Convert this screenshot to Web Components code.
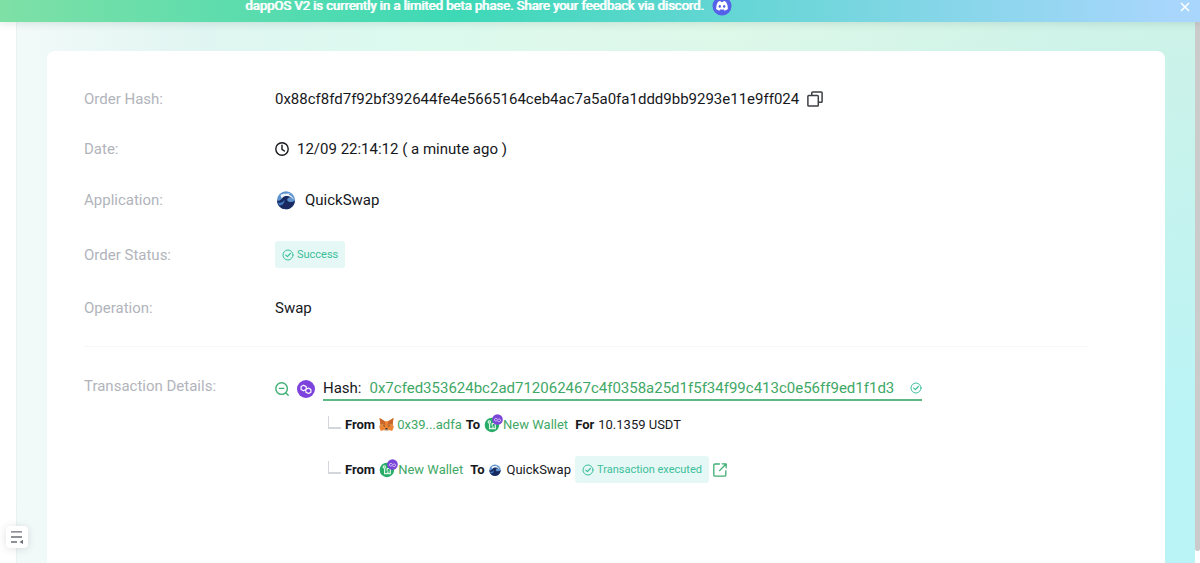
<!DOCTYPE html>
<html lang="en">
<head>
<meta charset="utf-8">
<meta name="viewport" content="width=device-width, initial-scale=1">
<title>dappOS - Order Details</title>
<style>
	body {
		margin: 0;
		color: #16181c;
		font-family: Roboto, "Liberation Sans", sans-serif;
		font-size: 15px;
		line-height: 20px;
		--green: #3fa866;
		--teal: #3cbf9a;
	}
</style>
</head>
<body>

<order-page>
	<beta-banner slot="banner">dappOS V2 is currently in a limited beta phase. Share your feedback via discord.</beta-banner>

	<order-card>
		<order-row label="Order Hash:">
			<span>0x88cf8fd7f92bf392644fe4e5665164ceb4ac7a5a0fa1ddd9bb9293e11e9ff024</span>
			<icon-button label="Copy order hash" icon="copy" size="16"></icon-button>
		</order-row>
		<order-row label="Date:">
			<ui-icon name="clock" size="14"></ui-icon>
			<span>12/09 22:14:12 ( a minute ago )</span>
		</order-row>
		<order-row label="Application:">
			<ui-icon name="quickswap" size="22"></ui-icon>
			<span>QuickSwap</span>
		</order-row>
		<order-row label="Order Status:">
			<status-tag>Success</status-tag>
		</order-row>
		<order-row label="Operation:">
			<span>Swap</span>
		</order-row>

		<order-row slot="details" label="Transaction Details:">
			<tx-details hash="0x7cfed353624bc2ad712062467c4f0358a25d1f5f34f99c413c0e56ff9ed1f1d3">
				<tx-step>
					<b>From</b>
					<wallet-link icon="fox">0x39...adfa</wallet-link>
					<b>To</b>
					<wallet-link icon="wallet" spaced>New Wallet</wallet-link>
					<b>For</b>
					<span>10.1359 USDT</span>
				</tx-step>
				<tx-step>
					<b>From</b>
					<wallet-link icon="wallet" spaced>New Wallet</wallet-link>
					<b>To</b>
					<ui-icon name="quickswap" size="14"></ui-icon>
					<span>QuickSwap</span>
					<status-tag>Transaction executed</status-tag>
					<icon-button label="Open in explorer" icon="external" size="14"></icon-button>
				</tx-step>
			</tx-details>
		</order-row>
	</order-card>
</order-page>

<script>
// Icon set, one entry per name: [viewBox, markup]
const ICONS = {
	copy: ['0 0 16 16', `
		<g fill="none" stroke="#3c3f44" stroke-width="1.5" stroke-linejoin="round">
			<rect x=".9" y="4.6" width="10.4" height="10.4" rx=".8"/>
			<path d="M4.8 4.4V1.7q0-.8.8-.8h8.7q.8 0 .8.8v8.7q0 .8-.8.8h-2.8"/>
		</g>`],
	clock: ['0 0 14 14', `
		<g fill="none" stroke="#16181c" stroke-width="1.4" stroke-linecap="round" stroke-linejoin="round">
			<circle cx="7" cy="7" r="6.2"/>
			<path d="M7 3.2V7.4L9.4 9"/>
		</g>`],
	check: ['0 0 12 12', `
		<g fill="none" stroke="currentColor" stroke-linecap="round" stroke-linejoin="round">
			<circle cx="6" cy="6" r="5"/>
			<path d="M3.7 6.1 5.4 7.6 8.4 4.5" stroke-width="1.2"/>
		</g>`],
	collapse: ['0 0 14 14', `
		<g fill="none" stroke="#3fae72" stroke-width="1.4" stroke-linecap="round">
			<circle cx="6.6" cy="6.6" r="5.8"/>
			<path d="M4.4 6.4h4.4M11 11l2.2 2.2"/>
		</g>`],
	external: ['0 0 14 14', `
		<g fill="none" stroke="#3fae72" stroke-width="1.3" stroke-linecap="round" stroke-linejoin="round">
			<path d="M6.4 1H2Q.8 1 .8 2.2V12q0 1.2 1.2 1.2h9.6q1.2 0 1.2-1.2V7.8"/>
			<path d="M9.2.8h4v4M13 1 6.6 7.6"/>
		</g>`],
	close: ['0 0 10 10', `
		<path d="M1 1l8 8M9 1 1 9" fill="none" stroke="#fff" stroke-width="1.6"/>`],
	menu: ['0 0 14 14', `
		<path d="M1 1.8h11M1 7h11M1 12h6" fill="none" stroke="#6b6e75" stroke-width="1.3"/>
		<path d="M13 9.8v4.2L9.5 11.9z" fill="#6b6e75"/>`],
	discord: ['0 0 20 20', `
		<circle cx="10" cy="10" r="9.5" fill="#5661ea"/>
		<path d="M5.9 5.9Q7.2 5.2 8.5 5l.5.9h2l.5-.9q1.3.2 2.6.9 2.2 3.3 1.8 7.2-1.5 1.1-3.2 1.6l-.8-1.3H8.1l-.8 1.3q-1.7-.5-3.2-1.6-.3-4 1.8-7.2z" fill="#fff"/>
		<ellipse cx="7.8" cy="10.4" rx="1.2" ry="1.4" fill="#5661ea"/>
		<ellipse cx="12.2" cy="10.4" rx="1.2" ry="1.4" fill="#5661ea"/>`],
	polygon: ['0 0 18 18', `
		<circle cx="9" cy="9" r="9" fill="#7c43dd"/>
		<g fill="none" stroke="#fff" stroke-width="1.2" stroke-linejoin="round">
			<path d="M9.2 8.9V6.6L6.6 5.2 4.1 6.6v2.8l2.5 1.4 4.8-2.8 2.5 1.4v2.8l-2.5 1.4-2.5-1.4V10.3"/>
		</g>`],
	quickswap: ['-1 -1 22 22', `
		<circle cx="10" cy="10.3" r="9" fill="#5e93cf"/>
		<path d="M4.5 5.2C6 3.800 8 3.400 10 3.800l4-.6-1.500 1.200c2.500.8 4.300 2.700 5.300 5-2.300-2-5-2.900-7-1.800l-5 1z" fill="#eef5fb"/>
		<path d="M1.100 10.500C3.500 11.500 5.500 9.500 6.500 7.800 8 5.500 12.500 5.200 16 7.800c-3.200-.9-5 .3-4.800 2.300.3 2.300 4.500 2.800 7.700.4C18.700 15.600 14.800 19.300 10 19.300 5 19.300 1.100 15.500 1.100 10.500z" fill="#182a60"/>
		<path d="M2 12.500c2.800.9 5.600-.6 6.600-3 0 4-2.500 6.500-5.600 5.800z" fill="#3f78bd"/>`],
	fox: ['0 0 16 16', `
		<path d="M.6 1 6.2 4.5h3.6L15.4 1l-.8 6.5 1 3.3-1.5 4-3.5-1-1.5 1.2H6.9L5.4 13.8l-3.5 1-1.5-4 1-3.3z" fill="#ee8431"/>
		<path d="M.6 1 6.2 4.500 7 9 1.4 7.5zM15.4 1 9.8 4.5 9 9l5.6-1.5z" fill="#c9672b"/>
		<path d="M1.4 7.5 6 8l-3 3-2.6-.2zM14.6 7.5 10 8l3 3 2.6-.2z" fill="#e28a42"/>
		<path d="M5.4 13.8 6.9 12.5h2.2l1.5 1.3L9.1 15H6.9z" fill="#d9c5b2"/>
		<path d="M4.3 8.6l2 .9-.7.8zM11.7 8.6l-2 .9.7.8z" fill="#273341"/>
		<path d="M7 12h2l.3 1.3H6.7z" fill="#1c1a1a"/>`],
	wallet: ['0 0 20 20', `
		<circle cx="8.3" cy="11.5" r="7.6" fill="#27ac67"/>
		<g fill="none" stroke="#dff6e9" stroke-width="1.3" stroke-linejoin="round">
			<circle cx="5.6" cy="8.3" r="1.2"/>
			<path d="M5.9 9.9v5.6h6V10H8.6v2.4M8.3 13.9h2"/>
		</g>
		<circle cx="14.2" cy="5.8" r="5.6" fill="#7b45d8"/>
		<path d="M14.3 5.7 12.6 4.4 11 5.5v1.2l1.6 1 3.2-2.7 1.6 1v1.3l-1.6 1-1.5-.9" fill="none" stroke="#ddcdf7" stroke-width=".9"/>`]
};

class UiIcon extends HTMLElement {
	constructor() {
		super();
		this.attachShadow({ mode: 'open' });
	}

	connectedCallback() {
		const [viewBox, shapes] = ICONS[this.getAttribute('name')];
		const size = this.getAttribute('size') || 16;
		this.shadowRoot.innerHTML = `
			<style>
				:host {
					display: inline-flex;
					flex: none;
				}

				svg {
					display: block;
				}
			</style>
			<svg width="${size}" height="${size}" viewBox="${viewBox}" aria-hidden="true">${shapes}</svg>
		`;
	}
}

// A bare button that only holds an icon
class IconButton extends HTMLElement {
	constructor() {
		super();
		this.attachShadow({ mode: 'open' });
	}

	connectedCallback() {
		this.shadowRoot.innerHTML = `
			<style>
				:host {
					display: inline-flex;
					flex: none;
				}

				button {
					background: none;
					border: 0;
					cursor: pointer;
					display: flex;
					padding: 0;
				}
			</style>
			<button type="button" aria-label="${this.getAttribute('label')}">
				<ui-icon name="${this.getAttribute('icon')}" size="${this.getAttribute('size')}"></ui-icon>
			</button>
		`;
	}
}

class BetaBanner extends HTMLElement {
	constructor() {
		super();
		this.attachShadow({ mode: 'open' }).innerHTML = `
			<style>
				:host {
					align-items: flex-start;
					background: linear-gradient(90deg, #7ee0a5, #3dd9b6 38%, #5dd6d0 57%, #a9d6fd 98%);
					box-shadow: 0 1px 8px rgba(40, 90, 70, 0.16);
					box-sizing: border-box;
					color: #fff;
					display: flex;
					font-size: 13px;
					height: 22px;
					line-height: 12px;
					padding: 0 10px 0 245px;
					position: relative;
					text-shadow: 1px 0 #fff;
				}

				.message {
					align-items: center;
					display: flex;
					flex: 1;
					gap: 8px;
					height: 12px;
				}

				a {
					display: flex;
				}

				icon-button {
					padding-top: 2px;
				}
			</style>
			<div class="message">
				<slot></slot>
				<a href="#discord" aria-label="Discord"><ui-icon name="discord" size="20"></ui-icon></a>
			</div>
			<icon-button label="Close" icon="close" size="10"></icon-button>
		`;
	}
}

class OrderPage extends HTMLElement {
	constructor() {
		super();
		this.attachShadow({ mode: 'open' }).innerHTML = `
			<style>
				:host {
					display: flex;
					flex-direction: column;
					min-height: 100vh;
					position: relative;
				}

				.body {
					display: flex;
					flex: 1;
				}

				.rail {
					background: #fff;
					border-right: 1px solid #e8f2f0;
					width: 16px;
				}

				main {
					background:
						linear-gradient(to bottom, rgba(184, 244, 248, 0), rgba(184, 244, 248, 0.9) 75%) right / 50% 100% no-repeat,
						linear-gradient(90deg, #f2faf9, #e0f5f1 16%, #dcfaef 32%, #dff8e8 60%, #cff3e8 90%, #cdf2e8);
					display: flex;
					flex: 1;
					padding: 29px 30px 0;
				}

				.scroll {
					background: #fff;
					padding-bottom: 12px;
					display: flex;
				}

				.thumb {
					background: #cbcbcb;
					border-radius: 0 0 2px 2px;
					width: 5px;
				}

				.toggle {
					align-items: center;
					background: #fff;
					border-radius: 4px;
					bottom: 15px;
					box-shadow: 0 1px 8px rgba(0, 0, 0, 0.12);
					display: flex;
					height: 22px;
					justify-content: center;
					left: 6px;
					position: absolute;
					width: 22px;
				}
			</style>
			<slot name="banner"></slot>
			<div class="body">
				<div class="rail"></div>
				<main><slot></slot></main>
				<div class="scroll"><div class="thumb"></div></div>
			</div>
			<icon-button class="toggle" label="Toggle menu" icon="menu" size="14"></icon-button>
		`;
	}
}

class OrderCard extends HTMLElement {
	constructor() {
		super();
		this.attachShadow({ mode: 'open' }).innerHTML = `
			<style>
				:host {
					background: #fff;
					border-radius: 8px 8px 0 0;
					box-sizing: border-box;
					display: block;
					flex: 1;
					padding: 38px 76px 38px 37px;
				}

				.rows {
					display: grid;
					row-gap: 30px;
				}

				hr {
					border: 0;
					border-top: 1px solid #f7f7f8;
					margin: 28px 0 29px;
				}
			</style>
			<div class="rows"><slot></slot></div>
			<hr>
			<slot name="details"></slot>
		`;
	}
}

class OrderRow extends HTMLElement {
	constructor() {
		super();
		this.attachShadow({ mode: 'open' });
	}

	connectedCallback() {
		this.shadowRoot.innerHTML = `
			<style>
				:host {
					align-items: center;
					display: grid;
					grid-template-columns: 191px 1fr;
				}

				:host([slot="details"]) {
					align-items: start;
				}

				.label {
					color: #b1b4bb;
				}

				.value {
					align-items: center;
					display: flex;
					gap: 8px;
					min-width: 0;
				}
			</style>
			<div class="label">${this.getAttribute('label')}</div>
			<div class="value"><slot></slot></div>
		`;
	}
}

class StatusTag extends HTMLElement {
	constructor() {
		super();
		this.attachShadow({ mode: 'open' }).innerHTML = `
			<style>
				:host {
					align-items: center;
					background: #e5f8f5;
					border-radius: 3px;
					color: var(--teal);
					display: inline-flex;
					font-size: 11px;
					gap: 3px;
					height: 27px;
					padding: 0 7px;
				}
			</style>
			<ui-icon name="check" size="12"></ui-icon>
			<slot></slot>
		`;
	}
}

class WalletLink extends HTMLElement {
	constructor() {
		super();
		this.attachShadow({ mode: 'open' });
	}

	connectedCallback() {
		const icon = this.getAttribute('icon');
		this.shadowRoot.innerHTML = `
			<style>
				:host {
					display: inline-flex;
				}

				:host([spaced]) {
					margin-right: 3px;
				}

				a {
					align-items: center;
					color: var(--green);
					display: flex;
					gap: 3px;
					text-decoration: none;
				}

				:host([spaced]) a {
					gap: 0;
				}

				:host([spaced]) ui-icon {
					padding-bottom: 3px;
				}
			</style>
			<a href="#wallet">
				<ui-icon name="${icon}" size="${icon === 'fox' ? 15 : 19}"></ui-icon>
				<slot></slot>
			</a>
		`;
	}
}

// The hash line and, under it, the steps of the transaction
class TxDetails extends HTMLElement {
	constructor() {
		super();
		this.attachShadow({ mode: 'open' });
	}

	connectedCallback() {
		this.shadowRoot.innerHTML = `
			<style>
				:host {
					display: block;
				}

				.head {
					align-items: center;
					display: flex;
					gap: 8px;
				}

				.hash {
					align-items: center;
					border-bottom: 2px solid #5cb985;
					display: flex;
					gap: 8px;
					height: 23px;
				}

				.hash a {
					color: var(--green);
					text-decoration: none;
				}

				.hash ui-icon {
					color: var(--teal);
					padding-left: 8px;
				}

				.steps {
					display: grid;
					padding: 1px 0 0 53px;
				}
			</style>
			<div class="head">
				<icon-button label="Collapse" icon="collapse" size="14"></icon-button>
				<ui-icon name="polygon" size="18"></ui-icon>
				<div class="hash">
					<span>Hash:</span>
					<a href="#tx">${this.getAttribute('hash')}</a>
					<ui-icon name="check" size="12"></ui-icon>
				</div>
			</div>
			<div class="steps"><slot></slot></div>
		`;
	}
}

class TxStep extends HTMLElement {
	constructor() {
		super();
		this.attachShadow({ mode: 'open' }).innerHTML = `
			<style>
				:host {
					align-items: center;
					display: flex;
					font-size: 13px;
					gap: 4px;
					height: 45px;
				}

				.branch {
					border: solid #d3d6db;
					border-width: 0 0 2px 1px;
					height: 11px;
					margin-bottom: 4px;
					width: 12px;
				}
			</style>
			<span class="branch"></span>
			<slot></slot>
		`;
	}
}

customElements.define('ui-icon', UiIcon);
customElements.define('icon-button', IconButton);
customElements.define('beta-banner', BetaBanner);
customElements.define('order-page', OrderPage);
customElements.define('order-card', OrderCard);
customElements.define('order-row', OrderRow);
customElements.define('status-tag', StatusTag);
customElements.define('wallet-link', WalletLink);
customElements.define('tx-details', TxDetails);
customElements.define('tx-step', TxStep);
</script>
</body>
</html>
